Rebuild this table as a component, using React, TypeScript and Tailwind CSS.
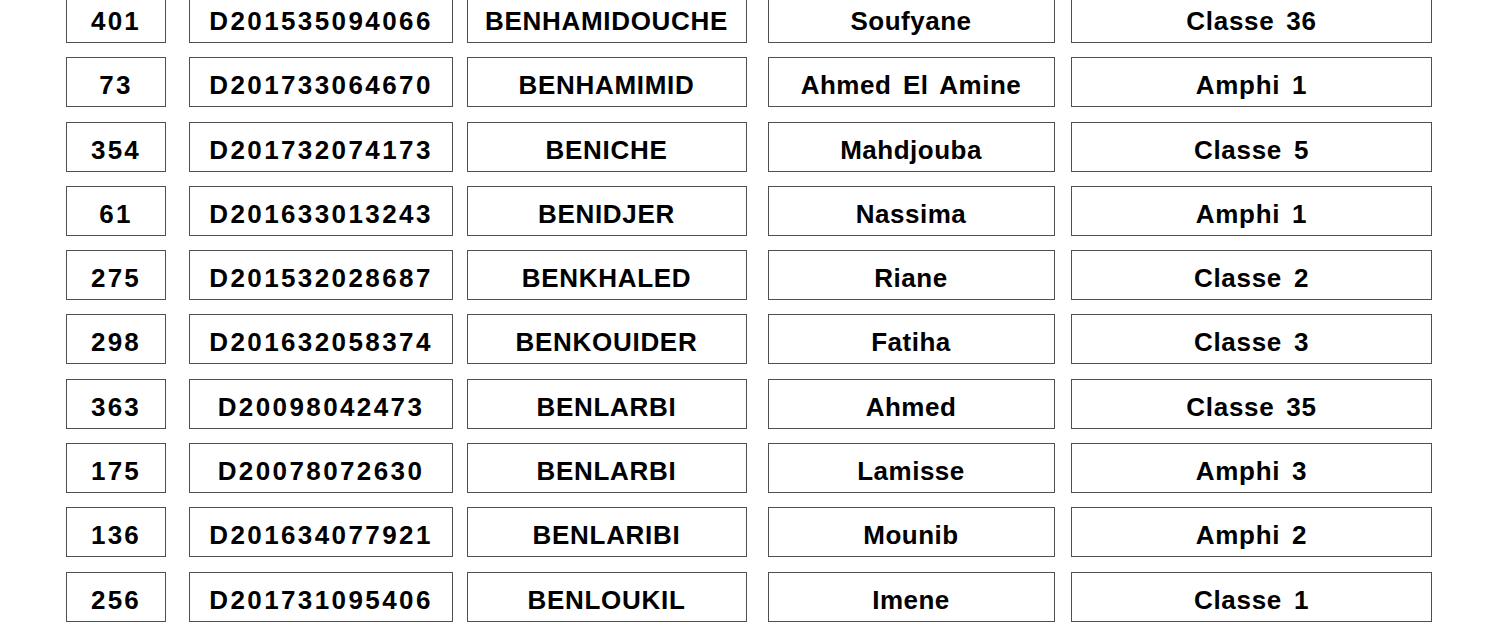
import React from "react";

const rows: [string, string, string, string, string][] = [
  ["401", "D201535094066", "BENHAMIDOUCHE", "Soufyane", "Classe 36"],
  ["73", "D201733064670", "BENHAMIMID", "Ahmed El Amine", "Amphi 1"],
  ["354", "D201732074173", "BENICHE", "Mahdjouba", "Classe 5"],
  ["61", "D201633013243", "BENIDJER", "Nassima", "Amphi 1"],
  ["275", "D201532028687", "BENKHALED", "Riane", "Classe 2"],
  ["298", "D201632058374", "BENKOUIDER", "Fatiha", "Classe 3"],
  ["363", "D20098042473", "BENLARBI", "Ahmed", "Classe 35"],
  ["175", "D20078072630", "BENLARBI", "Lamisse", "Amphi 3"],
  ["136", "D201634077921", "BENLARIBI", "Mounib", "Amphi 2"],
  ["256", "D201731095406", "BENLOUKIL", "Imene", "Classe 1"],
];

const cell =
  "h-[50px] shrink-0 border-[1.5px] border-[#505050] pt-[14px] text-center text-[26px] leading-[26px] font-bold text-black whitespace-nowrap";

export default function App() {
  return (
    <div
      className="w-[1500px] h-[630px] overflow-hidden bg-white"
      style={{ fontFamily: '"Liberation Sans", Arial, sans-serif' }}
    >
      <div className="mt-[-7px] pl-[66px] flex flex-col gap-[14.3px]">
        {rows.map((r, i) => (
          <div key={i} className="flex">
            <div className={`${cell} w-[100px] tracking-[2.2px]`}>{r[0]}</div>
            <div className={`${cell} w-[264px] ml-[23px] tracking-[2.4px]`}>{r[1]}</div>
            <div className={`${cell} w-[280px] ml-[13.5px] tracking-[0.7px]`}>{r[2]}</div>
            <div className={`${cell} w-[287px] ml-[21px] tracking-[0.5px] [word-spacing:4px]`}>{r[3]}</div>
            <div className={`${cell} w-[361px] ml-[16.5px] tracking-[0.7px] [word-spacing:4px]`}>{r[4]}</div>
          </div>
        ))}
      </div>
    </div>
  );
}
